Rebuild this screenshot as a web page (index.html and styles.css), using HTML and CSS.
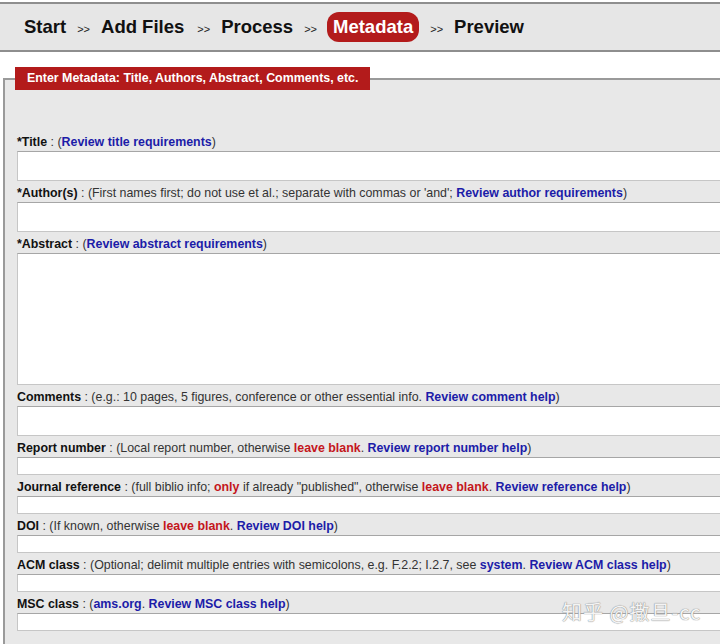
FILE: index.html
```html
<!DOCTYPE html>
<html lang="en">
<head>
  <meta charset="UTF-8">
  <title>Submit: Metadata</title>
  <link rel="stylesheet" href="styles.css">
</head>
<body>

  <div class="steps">
    <span class="step">Start</span>
    <span class="sep">&gt;&gt;</span>
    <span class="step">Add Files</span>
    <span class="sep s2">&gt;&gt;</span>
    <span class="step">Process</span>
    <span class="sep s3">&gt;&gt;</span>
    <span class="step current">Metadata</span>
    <span class="sep">&gt;&gt;</span>
    <span class="step">Preview</span>
  </div>

  <div class="page">
    <fieldset class="meta">
      <legend>Enter Metadata: Title, Authors, Abstract, Comments, etc.</legend>

      <div class="field">
        <label><b>*Title</b> : (<a href="#">Review title requirements</a>)</label>
        <input class="big" type="text">
      </div>

      <div class="field">
        <label><b>*Author(s)</b> : (First names first; do not use et al.; separate with commas or 'and'; <a href="#">Review author requirements</a>)</label>
        <input class="big" type="text">
      </div>

      <div class="field">
        <label><b>*Abstract</b> : (<a href="#">Review abstract requirements</a>)</label>
        <textarea></textarea>
      </div>

      <div class="field">
        <label><b>Comments</b> : (e.g.: 10 pages, 5 figures, conference or other essential info. <a href="#">Review comment help</a>)</label>
        <input class="big" type="text">
      </div>

      <div class="field">
        <label><b>Report number</b> : (Local report number, otherwise <em>leave blank</em>. <a href="#">Review report number help</a>)</label>
        <input type="text">
      </div>

      <div class="field">
        <label><b>Journal reference</b> : (full biblio info; <em>only</em> if already "published", otherwise <em>leave blank</em>. <a href="#">Review reference help</a>)</label>
        <input type="text">
      </div>

      <div class="field">
        <label><b>DOI</b> : (If known, otherwise <em>leave blank</em>. <a href="#">Review DOI help</a>)</label>
        <input type="text">
      </div>

      <div class="field">
        <label><b>ACM class</b> : (Optional; delimit multiple entries with semicolons, e.g. F.2.2; I.2.7, see <a href="#">system</a>. <a href="#">Review ACM class help</a>)</label>
        <input type="text">
      </div>

      <div class="field">
        <label><b>MSC class</b> : (<a href="#">ams.org</a>. <a href="#">Review MSC class help</a>)</label>
        <input type="text">
      </div>
    </fieldset>
  </div>

  <div class="watermark">知乎 @撒旦-cc</div>

</body>
</html>
```

FILE: styles.css
```css
html {
  overflow: hidden;
}

body {
  font-family: "Liberation Sans", Arial, sans-serif;
  background: #fff;
  margin: 0;
  width: 780px;
  position: relative;
  height: 644px;
  overflow: hidden;
}

.steps {
  display: flex;
  align-items: center;
  margin-top: 2px;
  height: 46px;
  padding-left: 24px;
  background: #e6e6e6;
  border-top: 2px solid #8e8e8e;
  border-bottom: 2px solid #8e8e8e;
}

.step {
  font-size: 18.5px;
  font-weight: bold;
  color: #111;
}

.step.current {
  background: #b31b1b;
  color: #fff;
  padding: 0 6px;
  height: 30px;
  line-height: 30px;
  border-radius: 12px;
}

.sep {
  font-size: 11px;
  color: #222;
  margin: 3px 11px 0 11px;
}

.sep.s2 {
  margin-left: 13px;
}

.sep.s3 {
  margin-right: 10px;
}

.page {
  padding-top: 15px;
}

.meta {
  margin: 0 0 0 3px;
  padding: 40px 0 40px 12px;
  border: 2px solid #9a9a9a;
  border-right: none;
  border-bottom: none;
  background: #e8e8e8;
}

.meta legend {
  margin-left: -2px;
  padding: 0 12px;
  height: 23px;
  line-height: 23px;
  background: #b31b1b;
  color: #fff;
  font-size: 12.4px;
  font-weight: bold;
}

.field label {
  display: block;
  margin-top: 3px;
  line-height: 18px;
  font-size: 12.4px;
  color: #333;
}

.field label b {
  color: #111;
}

.field a {
  color: #1c1ca8;
  font-weight: bold;
  text-decoration: none;
}

.field em {
  font-style: normal;
  font-weight: bold;
  color: #c4161c;
}

.field input,
.field textarea {
  display: block;
  box-sizing: border-box;
  width: 100%;
  height: 18px;
  margin: 0;
  background: #fff;
  border: 1px solid #c6c6c6;
  border-top: 1px solid #a6a6a6;
  font-family: inherit;
  font-size: 13px;
}

.field input.big {
  height: 30px;
}

.field textarea {
  height: 132px;
  resize: none;
}

.watermark {
  position: absolute;
  left: 562px;
  top: 597px;
  font-family: "Noto Sans CJK SC", sans-serif;
  font-size: 20px;
  color: rgba(255, 255, 255, 0.92);
  text-shadow: 0 0 1px #8a8a8a, 0 0 1px #8a8a8a;
  letter-spacing: 1px;
}
```
